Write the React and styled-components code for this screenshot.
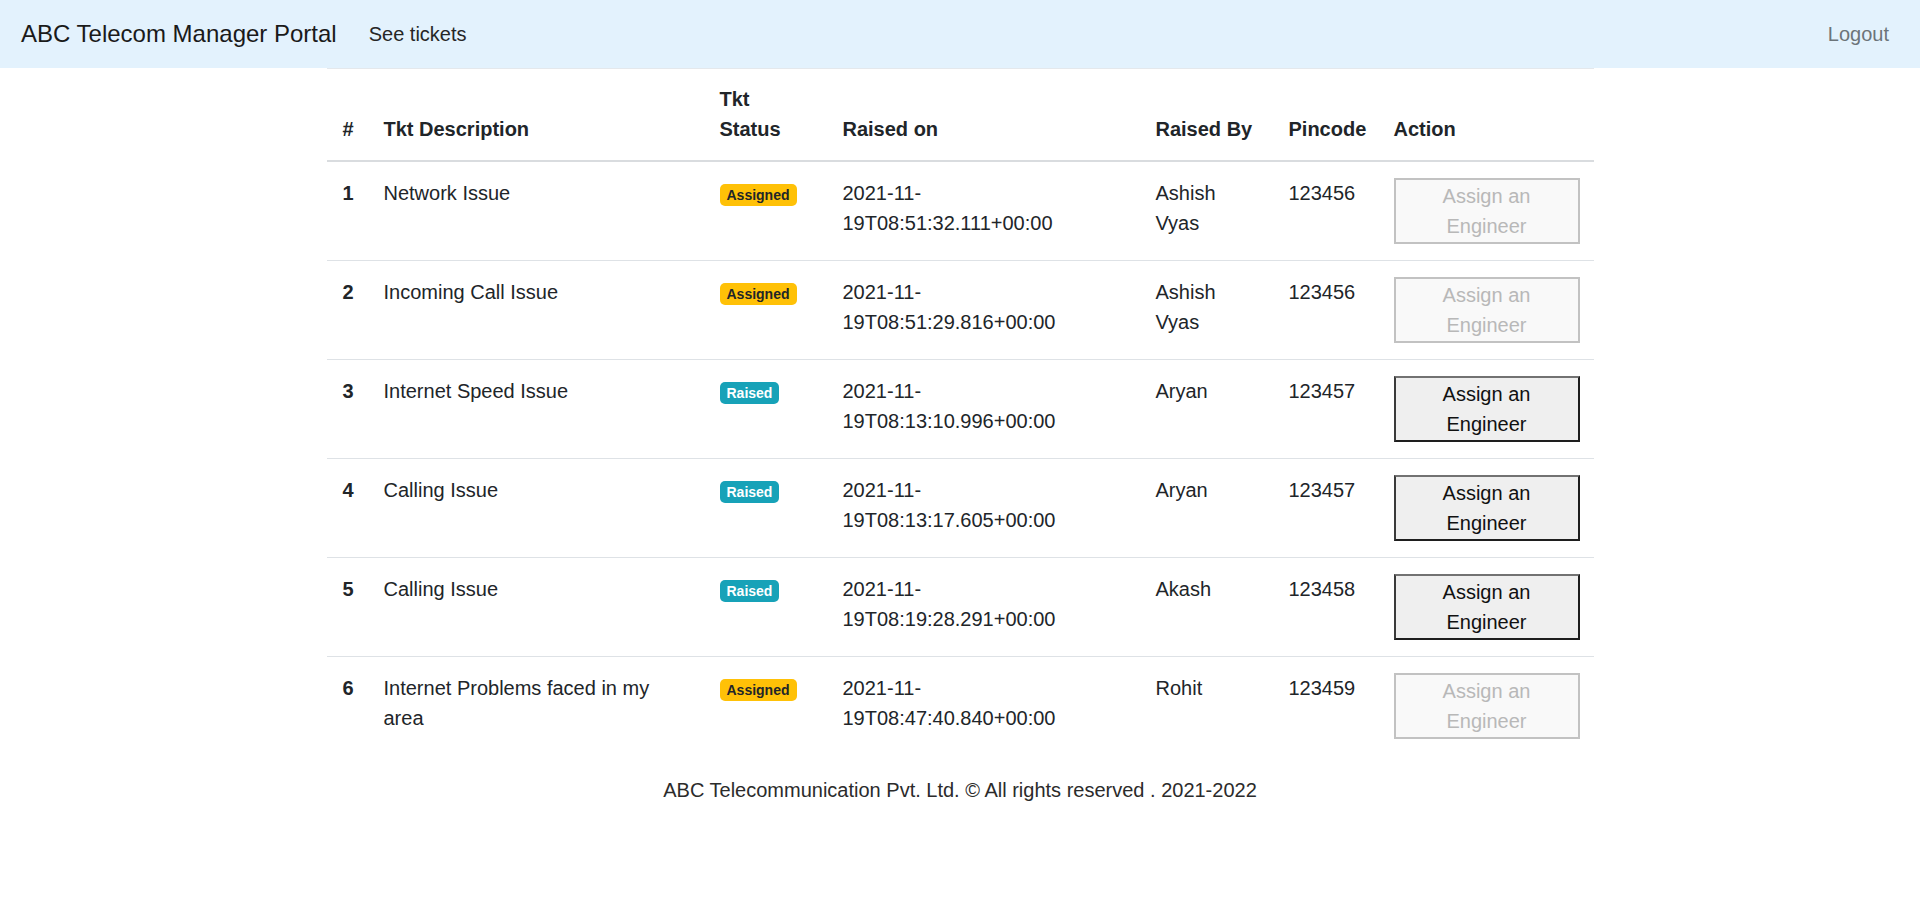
import React from 'react';
import styled, { createGlobalStyle } from 'styled-components';

const GlobalStyle = createGlobalStyle`
  body {
    margin: 0;
    font-family: 'Liberation Sans', Arial, sans-serif;
    font-size: 20px;
    line-height: 30px;
    color: #212529;
    background: #fff;
  }
`;

// cell widths follow the text columns of the original portal
const columns = [
  { key: 'id', label: '#', width: 41, pr: 8 },
  { key: 'desc', label: 'Tkt Description', width: 336, pr: 16 },
  { key: 'status', label: 'Tkt Status', width: 123, pr: 24 },
  { key: 'raisedOn', label: 'Raised on', width: 313, pr: 16 },
  { key: 'raisedBy', label: 'Raised By', width: 133, pr: 16 },
  { key: 'pincode', label: 'Pincode', width: 105, pr: 8 },
  { key: 'action', label: 'Action', width: 216, pr: 16 },
];

const tickets = [
  { id: 1, desc: 'Network Issue', status: 'Assigned', raisedOn: '2021-11-19T08:51:32.111+00:00', raisedBy: 'Ashish Vyas', pincode: '123456' },
  { id: 2, desc: 'Incoming Call Issue', status: 'Assigned', raisedOn: '2021-11-19T08:51:29.816+00:00', raisedBy: 'Ashish Vyas', pincode: '123456' },
  { id: 3, desc: 'Internet Speed Issue', status: 'Raised', raisedOn: '2021-11-19T08:13:10.996+00:00', raisedBy: 'Aryan', pincode: '123457' },
  { id: 4, desc: 'Calling Issue', status: 'Raised', raisedOn: '2021-11-19T08:13:17.605+00:00', raisedBy: 'Aryan', pincode: '123457' },
  { id: 5, desc: 'Calling Issue', status: 'Raised', raisedOn: '2021-11-19T08:19:28.291+00:00', raisedBy: 'Akash', pincode: '123458' },
  { id: 6, desc: 'Internet Problems faced in my area', status: 'Assigned', raisedOn: '2021-11-19T08:47:40.840+00:00', raisedBy: 'Rohit', pincode: '123459' },
];

const Navbar = styled.nav`
  display: flex;
  align-items: center;
  height: 68px;
  padding: 0 21px;
  background: #e3f2fd;
`;

const Brand = styled.a`
  font-size: 24px;
  color: #1a1a1a;
  margin-right: 22px;
  text-decoration: none;
`;

const NavLink = styled.a`
  padding: 0 10px;
  font-size: 20px;
  color: ${(p) => (p.$muted ? '#6c7479' : '#262626')};
  text-decoration: none;
  margin-left: ${(p) => (p.$push ? 'auto' : '0')};
`;

const Table = styled.table`
  width: 1267px;
  margin: 0 auto;
  border-collapse: collapse;
  table-layout: fixed;
  border-top: 1px solid #e4e8ec;
`;

const HeadCell = styled.th`
  width: ${(p) => p.$w}px;
  padding: 15px ${(p) => p.$pr}px 16px 16px;
  text-align: left;
  vertical-align: bottom;
  font-weight: 700;
  border-bottom: 2px solid #d9dcdf;
  box-sizing: border-box;
`;

const Row = styled.tr`
  border-bottom: 1px solid #dee2e6;

  &:last-child {
    border-bottom: none;
  }
`;

const Cell = styled.td`
  padding: 16px ${(p) => p.$pr}px 16px 16px;
  vertical-align: top;
  font-weight: ${(p) => (p.$bold ? 700 : 400)};
`;

const Badge = styled.span`
  display: inline-block;
  padding: 4px 7px;
  font-size: 14px;
  line-height: 14px;
  font-weight: 700;
  border-radius: 5px;
  color: ${(p) => (p.$status === 'Raised' ? '#fff' : '#212529')};
  background: ${(p) => (p.$status === 'Raised' ? '#17a2b8' : '#ffc107')};
`;

const AssignButton = styled.button`
  display: block;
  width: 186px;
  height: 66px;
  padding: 0 8px;
  font-family: inherit;
  font-size: 20px;
  line-height: 30px;
  border: 2px solid;
  border-color: #727272 #1e1e1e #1e1e1e #3a3a3a;
  background: #efefef;
  color: #111;

  &:disabled {
    border-color: #c2c2c2;
    background: #f9f9f9;
    color: #b8b8b8;
  }
`;

const Footer = styled.footer`
  padding-top: 20px;
  text-align: center;
  color: #2b2b2b;
`;

function TicketRow({ ticket }) {
  const pr = (key) => columns.find((c) => c.key === key).pr;

  return (
    <Row>
      <Cell $pr={pr('id')} $bold>{ticket.id}</Cell>
      <Cell $pr={pr('desc')}>{ticket.desc}</Cell>
      <Cell $pr={pr('status')}>
        <Badge $status={ticket.status}>{ticket.status}</Badge>
      </Cell>
      <Cell $pr={pr('raisedOn')}>{ticket.raisedOn}</Cell>
      <Cell $pr={pr('raisedBy')}>{ticket.raisedBy}</Cell>
      <Cell $pr={pr('pincode')}>{ticket.pincode}</Cell>
      <Cell $pr={pr('action')}>
        <AssignButton disabled={ticket.status === 'Assigned'}>
          Assign an Engineer
        </AssignButton>
      </Cell>
    </Row>
  );
}

export default function App() {
  return (
    <>
      <GlobalStyle />
      <Navbar>
        <Brand href='#'>ABC Telecom Manager Portal</Brand>
        <NavLink href='#'>See tickets</NavLink>
        <NavLink href='#' $muted $push>
          Logout
        </NavLink>
      </Navbar>
      <Table>
        <thead>
          <tr>
            {columns.map((col) => (
              <HeadCell key={col.key} $w={col.width} $pr={col.pr}>
                {col.label}
              </HeadCell>
            ))}
          </tr>
        </thead>
        <tbody>
          {tickets.map((t) => (
            <TicketRow key={t.id} ticket={t} />
          ))}
        </tbody>
      </Table>
      <Footer>
        ABC Telecommunication Pvt. Ltd. © All rights reserved . 2021-2022
      </Footer>
    </>
  );
}
